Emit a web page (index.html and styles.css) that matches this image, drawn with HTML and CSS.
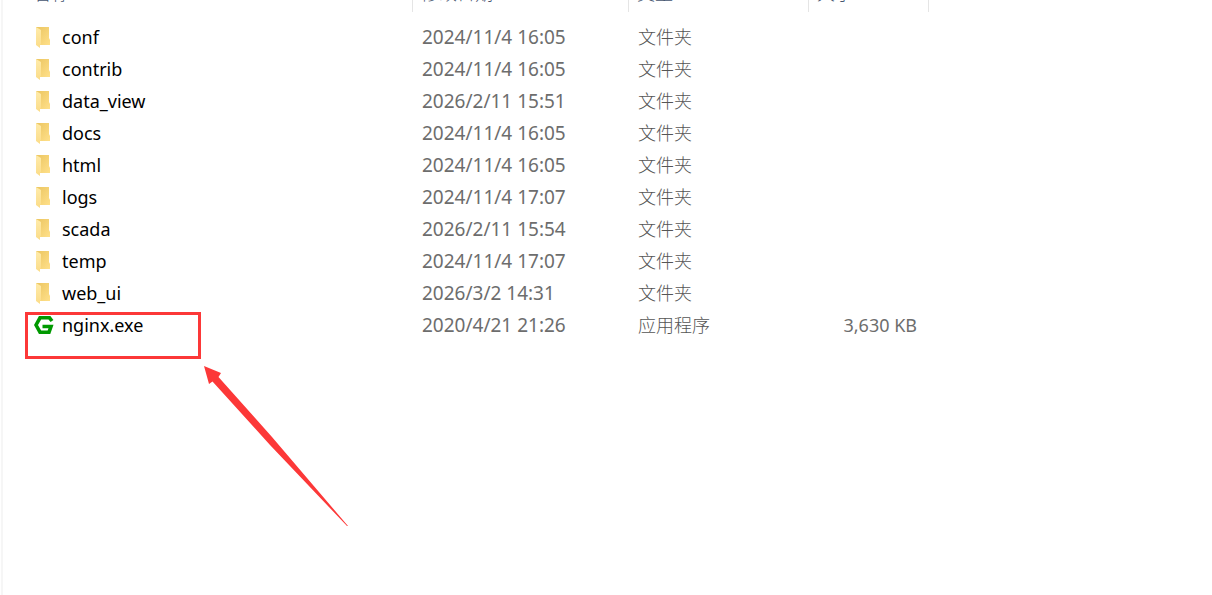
FILE: index.html
```html
<!DOCTYPE html>
<html lang="zh-CN">
<head>
    <meta charset="UTF-8">
    <meta name="viewport" content="width=device-width, initial-scale=1.0">
    <title>nginx</title>
    <link rel="stylesheet" href="styles.css">
</head>
<body>

<!-- shared icons -->
<svg class="sprite" aria-hidden="true">
    <defs>
        <linearGradient id="folder-back" x1="0" y1="0" x2="1" y2="1">
            <stop offset="0" stop-color="#ebc560"/>
            <stop offset="1" stop-color="#ffe08a"/>
        </linearGradient>
        <linearGradient id="folder-front" x1="0" y1="0" x2="0" y2="1">
            <stop offset="0" stop-color="#ffebaa"/>
            <stop offset="1" stop-color="#fbdc88"/>
        </linearGradient>
    </defs>
    <symbol id="folder" viewBox="0 0 20 22">
        <path d="M2 1h13v11l1 2v5H2z" fill="url(#folder-back)"/>
        <path d="M2 1l5 3v14l-1 1v3l-4-3z" fill="url(#folder-front)"/>
    </symbol>
    <symbol id="nginx" viewBox="0 0 20 18">
        <path d="M18 5L15.500 1.800H6L2 9l4 7.200h9l2-5.700H8.500" fill="none" stroke="#009900" stroke-width="3.600"/>
    </symbol>
</svg>

<main class="explorer">
    <table class="files">
        <colgroup>
            <col class="col-name">
            <col class="col-date">
            <col class="col-type">
            <col class="col-size">
        </colgroup>
        <thead>
            <tr>
                <th><div class="label">名称</div></th>
                <th><div class="label">修改日期</div></th>
                <th><div class="label">类型</div></th>
                <th><div class="label">大小</div></th>
            </tr>
        </thead>
        <tbody>
            <tr>
                <td><div class="name"><svg class="icon folder"><use href="#folder"/></svg>conf</div></td>
                <td>2024/11/4 16:05</td>
                <td class="type">文件夹</td>
                <td class="size"></td>
            </tr>
            <tr>
                <td><div class="name"><svg class="icon folder"><use href="#folder"/></svg>contrib</div></td>
                <td>2024/11/4 16:05</td>
                <td class="type">文件夹</td>
                <td class="size"></td>
            </tr>
            <tr>
                <td><div class="name"><svg class="icon folder"><use href="#folder"/></svg>data_view</div></td>
                <td>2026/2/11 15:51</td>
                <td class="type">文件夹</td>
                <td class="size"></td>
            </tr>
            <tr>
                <td><div class="name"><svg class="icon folder"><use href="#folder"/></svg>docs</div></td>
                <td>2024/11/4 16:05</td>
                <td class="type">文件夹</td>
                <td class="size"></td>
            </tr>
            <tr>
                <td><div class="name"><svg class="icon folder"><use href="#folder"/></svg>html</div></td>
                <td>2024/11/4 16:05</td>
                <td class="type">文件夹</td>
                <td class="size"></td>
            </tr>
            <tr>
                <td><div class="name"><svg class="icon folder"><use href="#folder"/></svg>logs</div></td>
                <td>2024/11/4 17:07</td>
                <td class="type">文件夹</td>
                <td class="size"></td>
            </tr>
            <tr>
                <td><div class="name"><svg class="icon folder"><use href="#folder"/></svg>scada</div></td>
                <td>2026/2/11 15:54</td>
                <td class="type">文件夹</td>
                <td class="size"></td>
            </tr>
            <tr>
                <td><div class="name"><svg class="icon folder"><use href="#folder"/></svg>temp</div></td>
                <td>2024/11/4 17:07</td>
                <td class="type">文件夹</td>
                <td class="size"></td>
            </tr>
            <tr>
                <td><div class="name"><svg class="icon folder"><use href="#folder"/></svg>web_ui</div></td>
                <td>2026/3/2 14:31</td>
                <td class="type">文件夹</td>
                <td class="size"></td>
            </tr>
            <tr>
                <td>
                    <div class="name">
                        <svg class="icon app"><use href="#nginx"/></svg>nginx.exe
                        <span class="mark"></span>
                        <svg class="arrow" viewBox="0 0 144 161" aria-hidden="true">
                            <path d="M0 0L17 7L14.500 11L68 71L144 160L143 160L66 79L8.500 15.500L5 18z" fill="#fc3838"/>
                        </svg>
                    </div>
                </td>
                <td>2020/4/21 21:26</td>
                <td class="type">应用程序</td>
                <td class="size">3,630 KB</td>
            </tr>
        </tbody>
    </table>
</main>

</body>
</html>
```

FILE: styles.css
```css
body {
    font-family: "Noto Sans", "Noto Sans CJK SC", sans-serif;
    margin: 0;
    background-color: #fff;
    color: #6d6d6d;
}

.sprite {
    position: absolute;
    width: 0;
    height: 0;
}

.explorer {
    box-sizing: border-box;
    min-height: 100vh;
    margin-left: 1px;
    padding-left: 22px;
    border-left: 2px solid #f6f6f6;
}

.files {
    table-layout: fixed;
    width: 904px;
    border-collapse: separate;
    border-spacing: 0;
    font-size: 19px;
    line-height: 32px;
}

.col-name {
    width: 388px;
}

.col-date {
    width: 216px;
}

.col-type {
    width: 180px;
}

.col-size {
    width: 120px;
}

th {
    padding: 0 0 9px;
    font-size: 18px;
    font-weight: 300;
    line-height: 20px;
    text-align: left;
    color: #44546f;
}

.label {
    display: flex;
    align-items: flex-end;
    box-sizing: border-box;
    height: 12px;
    padding: 0 8px 9px;
    border-right: 1px solid #e5e5e5;
    overflow: hidden;
}

td {
    height: 32px;
    padding: 0 9px;
    white-space: nowrap;
}

.type {
    font-size: 18px;
    font-weight: 300;
    color: #555;
}

.size {
    padding-right: 12px;
    font-size: 18px;
    text-align: right;
}

.name {
    position: relative;
    display: flex;
    align-items: center;
    gap: 8px;
    height: 32px;
    font-size: 18px;
    color: #000;
}

.icon {
    width: 20px;
    flex: none;
}

.folder {
    height: 22px;
}

.app {
    height: 18px;
}

/* red callout around nginx.exe */
.mark {
    position: absolute;
    top: 3px;
    left: -9px;
    box-sizing: border-box;
    width: 176px;
    height: 47px;
    border: 3px solid #fc3838;
}

.arrow {
    position: absolute;
    top: 57px;
    left: 170px;
    width: 144px;
    height: 161px;
}
```
